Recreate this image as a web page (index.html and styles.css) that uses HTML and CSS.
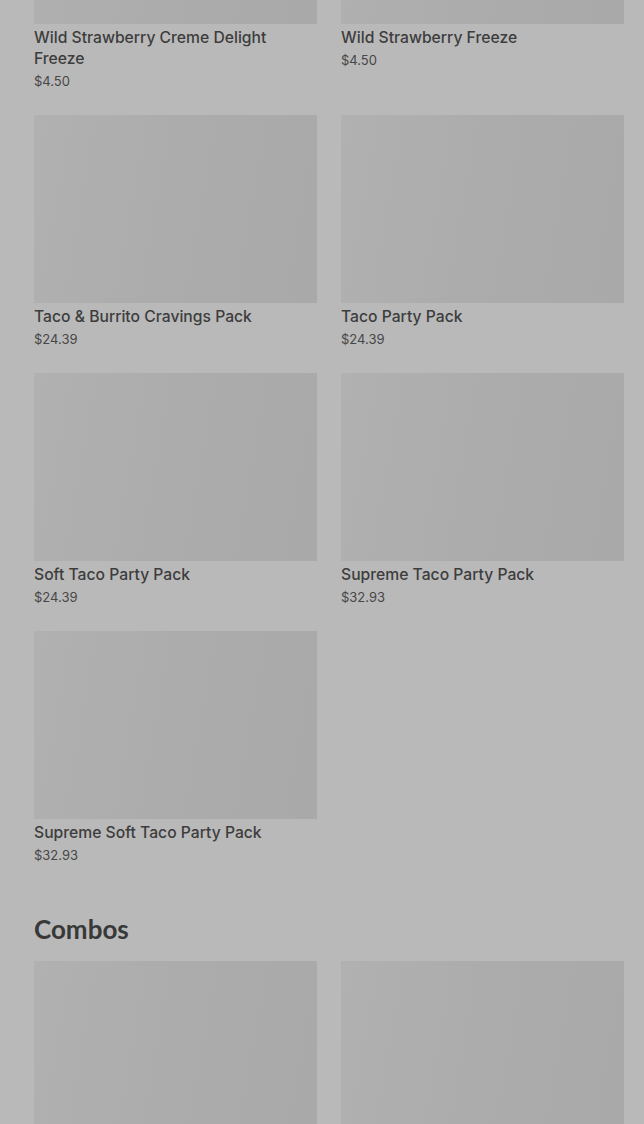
FILE: index.html
```html
<!DOCTYPE html>
<html>
<head>
<meta charset="utf-8">
<link rel="stylesheet" href="styles.css">
</head>
<body>
<main class="menu">
  <section class="category">
    <div class="grid">
      <div class="card"><div class="thumb"></div><div class="name">Wild Strawberry Creme Delight Freeze</div><div class="price">$4.50</div></div>
      <div class="card"><div class="thumb"></div><div class="name">Wild Strawberry Freeze</div><div class="price">$4.50</div></div>
      <div class="card"><div class="thumb"></div><div class="name">Taco &amp; Burrito Cravings Pack</div><div class="price">$24.39</div></div>
      <div class="card"><div class="thumb"></div><div class="name">Taco Party Pack</div><div class="price">$24.39</div></div>
      <div class="card"><div class="thumb"></div><div class="name">Soft Taco Party Pack</div><div class="price">$24.39</div></div>
      <div class="card"><div class="thumb"></div><div class="name">Supreme Taco Party Pack</div><div class="price">$32.93</div></div>
      <div class="card"><div class="thumb"></div><div class="name">Supreme Soft Taco Party Pack</div><div class="price">$32.93</div></div>
    </div>
  </section>
  <section class="category">
    <h2 class="heading">Combos</h2>
    <div class="grid">
      <div class="card"><div class="thumb"></div></div>
      <div class="card"><div class="thumb"></div></div>
    </div>
  </section>
</main>
</body>
</html>
```

FILE: styles.css
```css
html, body {
  margin: 0;
  padding: 0;
  background: #b9b9b9;
  overflow: hidden;
}
body {
  font-family: Inter, Roboto, "Liberation Sans", sans-serif;
  color: #3a3a3a;
}
.menu {
  margin-top: -164px;
  padding: 0 20px 0 34px;
}
.grid {
  display: grid;
  grid-template-columns: 1fr 1fr;
  column-gap: 24px;
  row-gap: 24px;
}
.thumb {
  height: 188px;
  background: linear-gradient(100deg, #b1b1b1 0%, #acacac 45%, #a9a9a9 100%);
}
.name {
  margin-top: 3px;
  font-size: 15.7px;
  line-height: 21px;
  font-weight: 500;
  color: #3d3d3d;
  padding-right: 30px;
}
.price {
  margin-top: 3px;
  font-size: 13px;
  line-height: 19px;
  color: #474747;
}
.category + .category {
  margin-top: 48px;
}
.heading {
  margin: 0 0 16px;
  font-family: Lato, "Open Sans", sans-serif;
  font-size: 26px;
  line-height: 32px;
  font-weight: 700;
  color: #383838;
}
```
